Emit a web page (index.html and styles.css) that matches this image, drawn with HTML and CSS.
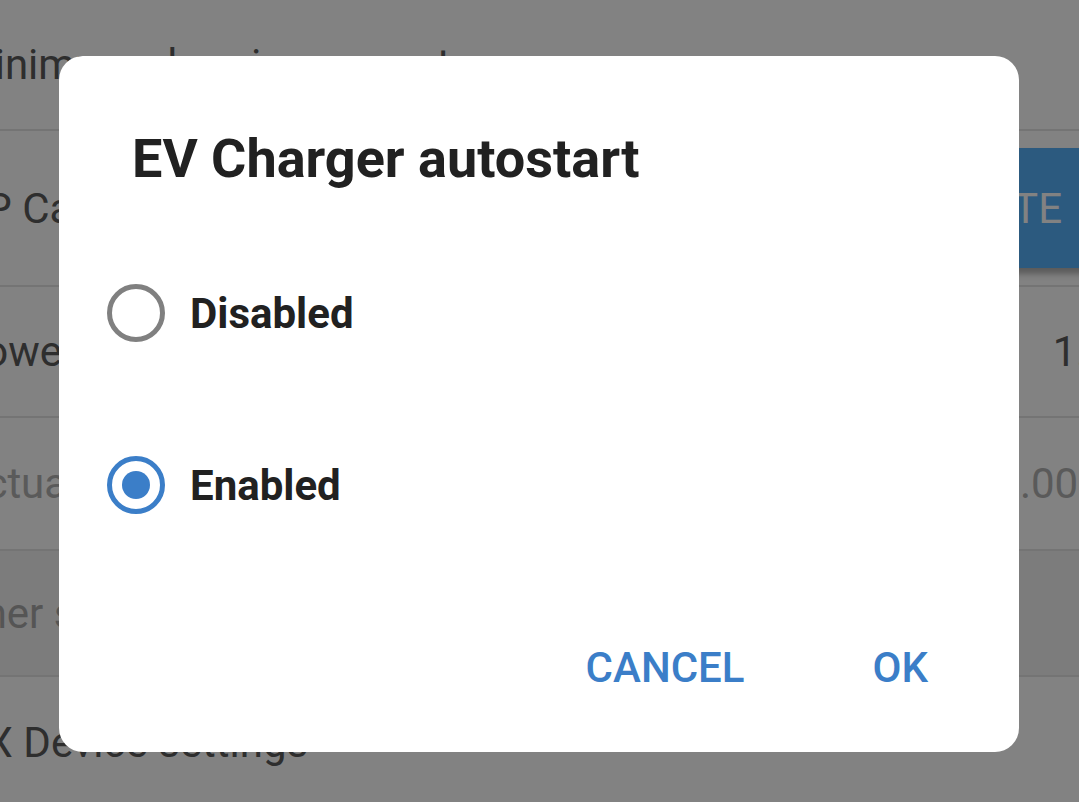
FILE: index.html
```html
<!DOCTYPE html>
<html lang="en">
<head>
<meta charset="utf-8">
<title>EV Charger autostart</title>
<link rel="stylesheet" href="styles.css">
</head>
<body>
<div class="screen">
  <div class="page">
    <div class="row row-a"><span class="label">Minimum charging current</span></div>
    <div class="row row-b"><span class="label">CP Cable check</span><button class="update">UPDATE</button></div>
    <div class="row row-c"><span class="label">Power</span><span class="value value-power">1.4 kW</span></div>
    <div class="row row-d muted"><span class="label">Actual current</span><span class="value value-current">0.00 A</span></div>
    <div class="row row-e muted section"><span class="label">Other settings</span></div>
    <div class="row row-f"><span class="label">GX Device settings</span></div>
  </div>
  <div class="scrim"></div>
  <div class="dialog" role="dialog" aria-labelledby="dlg-title">
    <h2 class="title" id="dlg-title">EV Charger autostart</h2>
    <div class="options">
      <label class="option">
        <svg class="radio" width="58" height="58" viewBox="0 0 58 58"><circle cx="29" cy="29" r="26.5" fill="none" stroke="#808080" stroke-width="5"/></svg>
        <span>Disabled</span>
      </label>
      <label class="option">
        <svg class="radio" width="58" height="58" viewBox="0 0 58 58"><circle cx="29" cy="29" r="26.5" fill="none" stroke="#3b7ec8" stroke-width="5"/><circle cx="29" cy="29" r="14" fill="#3b7ec8"/></svg>
        <span>Enabled</span>
      </label>
    </div>
    <div class="actions">
      <button class="btn">CANCEL</button>
      <button class="btn">OK</button>
    </div>
  </div>
</div>
</body>
</html>
```
FILE: styles.css
```css
html, body {
  margin: 0;
  padding: 0;
  height: 100%;
  overflow: hidden;
}
body {
  font-family: Roboto, "Noto Sans", "Liberation Sans", sans-serif;
  background: #ffffff;
}
.screen {
  position: relative;
  width: 1079px;
  height: 802px;
  overflow: hidden;
}
.page {
  margin-left: -42px;
  width: 1242px;
}
.row {
  display: flex;
  align-items: center;
  justify-content: space-between;
  box-sizing: border-box;
  border-bottom: 2px solid #e4e4e4;
  font-size: 42px;
  color: #5a5a5a;
  white-space: nowrap;
}
.row-a { height: 131px; }
.row-b { height: 156px; }
.row-c { height: 131px; }
.row-d { height: 133px; }
.row-e { height: 126px; }
.row-f { height: 130px; border-bottom: none; }
.muted { color: #b0b0b0; }
.section { background: #f4f4f4; color: #a8a8a8; }
.row-e .label { margin-left: -17px; }
.value-power { margin-right: 20px; }
.value-current { margin-right: 84px; }
.update {
  height: 120px;
  margin-right: 106px;
  padding: 0 32px;
  border: none;
  background: #56b1f9;
  color: #ffffff;
  font-family: inherit;
  font-size: 42px;
  box-shadow: 0 6px 6px rgba(0, 0, 0, 0.3);
}
.scrim {
  position: absolute;
  inset: 0;
  background: rgba(0, 0, 0, 0.49);
}
.dialog {
  position: absolute;
  left: 59px;
  top: 56px;
  width: 960px;
  height: 696px;
  box-sizing: border-box;
  padding: 71px 67px 45px 48px;
  background: #ffffff;
  border-radius: 24px;
  display: flex;
  flex-direction: column;
}
.title {
  margin: 0 0 36px 25px;
  font-size: 54px;
  font-weight: 700;
  line-height: 64px;
  color: #212121;
}
.options {
  display: flex;
  flex-direction: column;
}
.option {
  display: flex;
  align-items: center;
  gap: 25px;
  height: 172px;
  font-size: 42px;
  font-weight: 700;
  color: #212121;
}
.radio {
  flex: none;
  display: block;
}
.actions {
  margin-top: auto;
  display: flex;
  justify-content: flex-end;
  gap: 80px;
}
.btn {
  height: 80px;
  padding: 0 24px;
  border: none;
  background: none;
  color: #3b7ec8;
  font-family: inherit;
  font-size: 42px;
  font-weight: 500;
}
```
